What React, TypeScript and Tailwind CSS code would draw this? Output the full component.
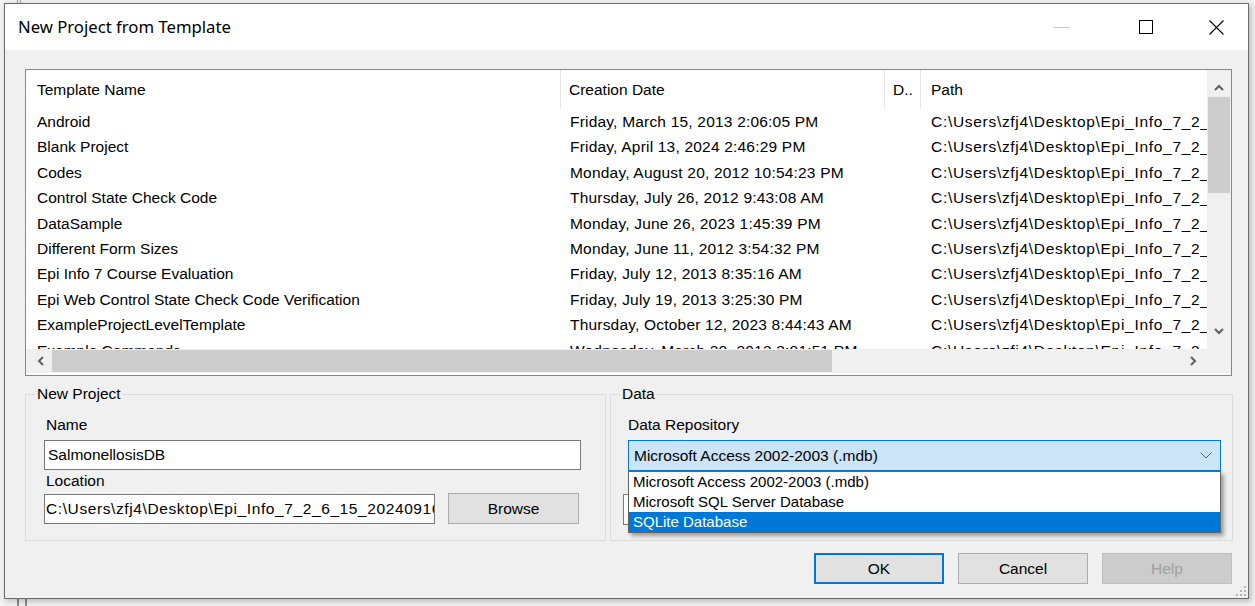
import React from "react";

const rows = [
  ["Android", "Friday, March 15, 2013 2:06:05 PM"],
  ["Blank Project", "Friday, April 13, 2024 2:46:29 PM"],
  ["Codes", "Monday, August 20, 2012 10:54:23 PM"],
  ["Control State Check Code", "Thursday, July 26, 2012 9:43:08 AM"],
  ["DataSample", "Monday, June 26, 2023 1:45:39 PM"],
  ["Different Form Sizes", "Monday, June 11, 2012 3:54:32 PM"],
  ["Epi Info 7 Course Evaluation", "Friday, July 12, 2013 8:35:16 AM"],
  ["Epi Web Control State Check Code Verification", "Friday, July 19, 2013 3:25:30 PM"],
  ["ExampleProjectLevelTemplate", "Thursday, October 12, 2023 8:44:43 AM"],
  ["Example Commands", "Wednesday, March 20, 2013 3:01:51 PM"],
];

const path = "C:\\Users\\zfj4\\Desktop\\Epi_Info_7_2_6_15_20240916\\Projects";

function Chevron({ dir }: { dir: "up" | "down" | "left" | "right" }) {
  const d = {
    up: "M1 6 L5 2 L9 6",
    down: "M1 2 L5 6 L9 2",
    left: "M6 1 L2 5 L6 9",
    right: "M2 1 L6 5 L2 9",
  }[dir];
  const vert = dir === "up" || dir === "down";
  return (
    <svg width={vert ? 10 : 8} height={vert ? 8 : 10} viewBox={vert ? "0 0 10 8" : "0 0 8 10"}>
      <path d={d} fill="none" stroke="#606060" strokeWidth="2" />
    </svg>
  );
}

export default function App() {
  return (
    <div className="relative w-[1255px] h-[606px] overflow-hidden bg-[#f2f2f2] pt-[3px] pl-[4px] font-['Liberation_Sans',Arial,sans-serif] text-black">
      {/* window edges behind the dialog */}
      <div className="absolute left-[17px] top-0 h-[4px] w-[1px] bg-[#9a9a9a]" />
      <div className="absolute left-[20px] top-0 h-[4px] w-[1px] bg-[#9a9a9a]" />
      <div className="absolute left-[17px] bottom-0 h-[8px] w-[2px] bg-[#8a8a8a]" />
      <div className="absolute left-[25px] bottom-0 h-[8px] w-[2px] bg-[#8a8a8a]" />

      <div className="relative flex h-[596px] w-[1245px] flex-col border border-[#6b6b6b] bg-[#f0f0f0] shadow-[2px_2px_6px_rgba(0,0,0,0.25)]">
        {/* title bar */}
        <div className="flex h-[46px] shrink-0 items-center bg-white pl-[13px] pr-[24px]">
          <div className="font-['Noto_Sans',sans-serif] text-[16.7px] leading-none text-black">New Project from Template</div>
          <div className="ml-auto flex items-center">
            <div className="h-[1px] w-[16px] bg-[#c8c8c8]" />
            <div className="ml-[69px] h-[14px] w-[14px] border border-black" />
            <svg className="ml-[56px]" width="15" height="15" viewBox="0 0 15 15">
              <path d="M0.5 0.5 L14.5 14.5 M14.5 0.5 L0.5 14.5" stroke="#000" strokeWidth="1.1" />
            </svg>
          </div>
        </div>

        {/* client area */}
        <div className="relative flex flex-1 flex-col pl-[20px] pr-[15px] pt-[19px] text-[15.5px]">
          {/* list view */}
          <div className="flex h-[307px] w-[1207px] flex-col border border-[#828790] bg-white">
            <div className="flex h-[279px]">
              <div className="min-w-0 flex-1 overflow-hidden">
                <div className="flex h-[39px] items-center whitespace-nowrap">
                  <div className="flex h-full w-[535px] shrink-0 items-center border-r border-[#e5e5e5] pl-[11px]">Template Name</div>
                  <div className="flex h-full w-[324px] shrink-0 items-center border-r border-[#e5e5e5] pl-[8px]">Creation Date</div>
                  <div className="flex h-full w-[36px] shrink-0 items-center border-r border-[#e5e5e5] pl-[8px]">D..</div>
                  <div className="flex h-full shrink-0 items-center pl-[10px]">Path</div>
                </div>
                {rows.map(([name, date]) => (
                  <div key={name} className="flex h-[25.4px] items-center whitespace-nowrap">
                    <div className="w-[535px] shrink-0 pl-[11px]">{name}</div>
                    <div className="w-[324px] shrink-0 pl-[9px] tracking-[0.2px]">{date}</div>
                    <div className="w-[36px] shrink-0" />
                    <div className="shrink-0 pl-[10px] tracking-[0.7px]">{path}</div>
                  </div>
                ))}
              </div>
              {/* vertical scrollbar */}
              <div className="flex w-[24px] shrink-0 flex-col items-center bg-[#f0f0f0]">
                <div className="flex h-[27px] items-center justify-center pt-[8px]">
                  <Chevron dir="up" />
                </div>
                <div className="h-[96px] w-[22px] bg-[#cdcdcd]" />
                <div className="mt-auto flex h-[30px] items-center justify-center pb-[6px]">
                  <Chevron dir="down" />
                </div>
              </div>
            </div>
            {/* horizontal scrollbar */}
            <div className="flex h-[24px] bg-[#f0f0f0]">
              <div className="flex flex-1 items-center">
                <div className="flex w-[26px] justify-center pl-[4px]">
                  <Chevron dir="left" />
                </div>
                <div className="h-[22px] w-[780px] bg-[#cdcdcd]" />
                <div className="ml-auto flex w-[26px] justify-center pr-[2px]">
                  <Chevron dir="right" />
                </div>
              </div>
              <div className="w-[24px] bg-[#f0f0f0]" />
            </div>
          </div>

          {/* group boxes */}
          <div className="mt-[9px] flex gap-[4px]">
            <fieldset className="h-[156px] w-[581px] border border-[#dcdcdc] px-0 pb-0">
              <legend className="ml-[10px] px-[1px] leading-[18px]">New Project</legend>
              <div className="flex flex-col pl-[18px]">
                <div className="mt-[13px] pl-[2px] leading-[18px]">Name</div>
                <div className="mt-[6px] flex h-[30px] w-[537px] items-center border border-[#7a7a7a] bg-white pl-[3px]">SalmonellosisDB</div>
                <div className="mt-[2px] pl-[2px] leading-[18px]">Location</div>
                <div className="mt-[3px] flex items-center">
                  <div className="flex h-[30px] w-[391px] items-center overflow-hidden whitespace-nowrap border border-[#7a7a7a] bg-white pl-[1px] tracking-[0.6px]">
                    C:\Users\zfj4\Desktop\Epi_Info_7_2_6_15_20240916
                  </div>
                  <div className="ml-[13px] flex h-[31px] w-[131px] items-center justify-center border border-[#adadad] bg-[#e1e1e1]">Browse</div>
                </div>
              </div>
            </fieldset>

            <fieldset className="h-[156px] w-[623px] border border-[#dcdcdc] px-0 pb-0">
              <legend className="ml-[10px] px-[1px] leading-[18px]">Data</legend>
              <div className="flex flex-col pl-[17px]">
                <div className="mt-[13px] leading-[18px]">Data Repository</div>
                <div className="relative mt-[6px] w-[593px]">
                  <div className="flex h-[31px] items-center border border-[#0078d7] bg-[#cce4f7] pl-[5px] pr-[8px]">
                    <span>Microsoft Access 2002-2003 (.mdb)</span>
                    <svg className="ml-auto" width="12" height="7" viewBox="0 0 12 7">
                      <path d="M0.5 0.5 L6 6 L11.5 0.5" fill="none" stroke="#606060" strokeWidth="1" />
                    </svg>
                  </div>
                  {/* open dropdown list */}
                  <div className="absolute left-0 top-[31px] z-10 w-[593px] border border-[#646464] bg-white text-[15px] shadow-[3px_3px_4px_rgba(0,0,0,0.35)]">
                    <div className="flex h-[20px] items-center pl-[4px]">Microsoft Access 2002-2003 (.mdb)</div>
                    <div className="flex h-[20px] items-center pl-[4px]">Microsoft SQL Server Database</div>
                    <div className="flex h-[20px] items-center bg-[#0078d7] pl-[4px] text-white">SQLite Database</div>
                  </div>
                </div>
                <div className="ml-[-5px] mt-[23px] h-[31px] w-[200px] border border-[#7a7a7a] bg-white" />
              </div>
            </fieldset>
          </div>

          {/* buttons */}
          <div className="mt-[12px] flex justify-end gap-[14px] pr-[1px]">
            <div className="flex h-[31px] w-[130px] items-center justify-center border-2 border-[#0078d7] bg-[#e1e1e1]">OK</div>
            <div className="flex h-[31px] w-[130px] items-center justify-center border border-[#adadad] bg-[#e1e1e1]">Cancel</div>
            <div className="flex h-[31px] w-[130px] items-center justify-center border border-[#bfbfbf] bg-[#cccccc] text-[#a0a0a0]">Help</div>
          </div>

          {/* resize grip */}
          <svg className="absolute bottom-[2px] right-[2px]" width="10" height="10" viewBox="0 0 10 10">
            <g fill="#b4b4b4">
              <rect x="8" y="0" width="2" height="2" />
              <rect x="4" y="4" width="2" height="2" />
              <rect x="8" y="4" width="2" height="2" />
              <rect x="0" y="8" width="2" height="2" />
              <rect x="4" y="8" width="2" height="2" />
              <rect x="8" y="8" width="2" height="2" />
            </g>
          </svg>
        </div>
      </div>
    </div>
  );
}
